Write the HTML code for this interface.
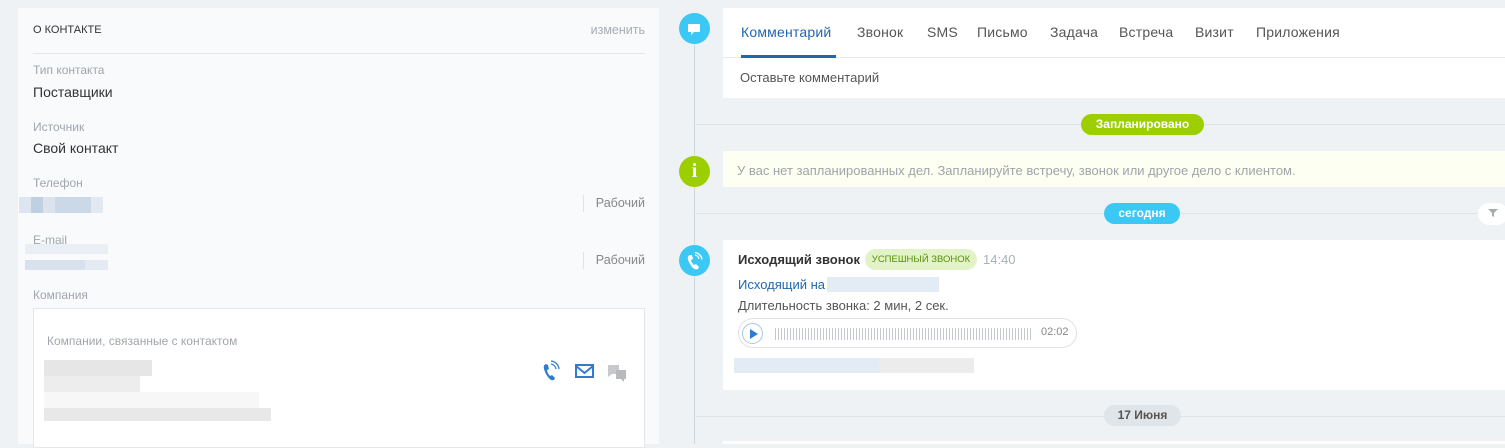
<!DOCTYPE html>
<html><head><meta charset="utf-8"><style>
*{margin:0;padding:0;box-sizing:border-box}
body{width:1505px;height:444px;overflow:hidden;background:#eef2f4;font-family:"Liberation Sans",sans-serif;position:relative}
.a{position:absolute}
.lbl{font-size:12px;color:#a0a6ab}
.val{font-size:14px;color:#333}
.pill{position:absolute;height:21px;border-radius:11px;color:#fff;font-size:12px;font-weight:bold;text-align:center;line-height:21px}
.circ{position:absolute;width:31px;height:31px;border-radius:50%;left:679px}
.hl{position:absolute;left:694px;right:0;height:1px;background:#dde3e7}
.tab{position:absolute;top:24px;font-size:14px;color:#555;letter-spacing:0.2px}
.r{position:absolute;right:860px;text-align:right}
</style></head><body>
<div class="a" style="left:18px;top:8px;width:641px;height:436px;background:#f8fafc"></div>
<div class="a" style="left:33px;top:24px;font-size:11px;color:#333">О КОНТАКТЕ</div>
<div class="r" style="top:23px;font-size:12.5px;color:#a8adb2">изменить</div>
<div class="a" style="left:33px;top:53px;width:612px;height:1px;background:#e3e7ea"></div>
<div class="a lbl" style="left:33px;top:63px">Тип контакта</div>
<div class="a val" style="left:33px;top:84px">Поставщики</div>
<div class="a lbl" style="left:33px;top:120px">Источник</div>
<div class="a val" style="left:33px;top:140px">Свой контакт</div>
<div class="a lbl" style="left:33px;top:176px">Телефон</div>
<div class="a" style="left:19px;top:197px;width:84px;height:16px;background:linear-gradient(90deg,#dde6f0 0 12px,#bfd0e3 12px 24px,#dbe4ee 24px 36px,#cbd8e7 36px 72px,#e2e9f2 72px)"></div>
<div class="a" style="left:583px;top:195px;width:1px;height:17px;background:#e0e4e7"></div>
<div class="r" style="top:196px;font-size:12.5px;color:#888">Рабочий</div>
<div class="a lbl" style="left:33px;top:233px">E-mail</div>
<div class="a" style="left:25px;top:244px;width:83px;height:10px;background:#eaeff6"></div>
<div class="a" style="left:25px;top:260px;width:83px;height:10px;background:linear-gradient(90deg,#d8e2ee 0 60px,#e4eaf2 60px)"></div>
<div class="a" style="left:583px;top:252px;width:1px;height:17px;background:#e0e4e7"></div>
<div class="r" style="top:253px;font-size:12.5px;color:#888">Рабочий</div>
<div class="a lbl" style="left:33px;top:288px">Компания</div>
<div class="a" style="left:33px;top:308px;width:612px;height:140px;background:#fff;border:1px solid #e3e7ea"></div>
<div class="a" style="left:47px;top:334px;font-size:12px;color:#a0a6ab">Компании, связанные с контактом</div>
<div class="a" style="left:44px;top:360px;width:108px;height:16px;background:#e6e6e6"></div>
<div class="a" style="left:44px;top:376px;width:96px;height:16px;background:#ededed"></div>
<div class="a" style="left:44px;top:392px;width:215px;height:16px;background:#f7f7f7"></div>
<div class="a" style="left:44px;top:408px;width:227px;height:13px;background:#e8e8e8"></div>
<svg class="a" style="left:540px;top:360px" width="100" height="24" viewBox="0 0 100 24">
<path d="M6 4c-3 1-3 4 0 10 3 5 5 7 8 6l1-2-3-3-2 1c-1-1-3-4-3-6l2-1-1-4z" fill="#2f7bd0"/>
<path d="M11 4a6 6 0 0 1 5 5M11 1a9 9 0 0 1 8 8" stroke="#2f7bd0" fill="none" stroke-width="1.3"/>
<rect x="36" y="5" width="17" height="12" fill="none" stroke="#2f7bd0" stroke-width="2"/>
<path d="M36 6l8.5 7 8.5-7" stroke="#2f7bd0" fill="none" stroke-width="2"/>
<path d="M68 5h11v9h-7l-4 3v-3z" fill="#c7c9cc"/><path d="M76 10h10v9h-2v3l-3-3h-5z" fill="#b8bbbe"/>
</svg>
<div class="a" style="left:694px;top:30px;width:1px;height:414px;background:#d0d7dc"></div>
<div class="circ" style="top:13px;background:#3bc8f5"></div>
<svg class="a" style="left:686px;top:21px" width="16" height="16"><path d="M2 3h12v8H8l-3 3v-3H2z" fill="#fff"/></svg>
<div class="circ" style="top:156px;background:#9dcf00"></div>
<div class="a" style="left:687px;top:156px;width:15px;text-align:center;color:#fff;font:bold 20px/31px 'Liberation Serif',serif">i</div>
<div class="circ" style="top:245px;background:#3bc8f5"></div>
<svg class="a" style="left:685px;top:252px" width="18" height="18"><path d="M5 3c-3 1-3 4 0 9s5 6 8 5l1-2-3-3-2 1c-1-1-3-3-3-5l2-1-1-4z" fill="#fff"/><path d="M10 3a5 5 0 0 1 4 4M10 0.5a8 8 0 0 1 7 7" stroke="#fff" fill="none" stroke-width="1.3"/></svg>
<div class="a" style="left:723px;top:8px;width:782px;height:90px;background:#fff"></div>
<div class="a" style="left:723px;top:57px;width:782px;height:1px;background:#e8ebed"></div>
<div class="tab" style="left:741px;color:#2067b0">Комментарий</div>
<div class="a" style="left:741px;top:55px;width:95px;height:3px;background:#2067b0"></div>
<div class="tab" style="left:857px">Звонок</div>
<div class="tab" style="left:927px">SMS</div>
<div class="tab" style="left:977px">Письмо</div>
<div class="tab" style="left:1050px">Задача</div>
<div class="tab" style="left:1119px">Встреча</div>
<div class="tab" style="left:1195px">Визит</div>
<div class="tab" style="left:1256px">Приложения</div>
<div class="a" style="left:740px;top:70px;font-size:13px;color:#555">Оставьте комментарий</div>
<div class="hl" style="top:124px"></div>
<div class="pill" style="left:1081px;top:114px;width:123px;background:#9dcf00">Запланировано</div>
<div class="a" style="left:723px;top:151px;width:782px;height:36px;background:#fefff3"></div>
<div class="a" style="left:737px;top:163px;font-size:13px;color:#a0a4a8">У вас нет запланированных дел. Запланируйте встречу, звонок или другое дело с клиентом.</div>
<div class="hl" style="top:213px"></div>
<div class="pill" style="left:1104px;top:203px;width:76px;background:#3bc8f5">сегодня</div>
<div class="a" style="left:1478px;top:203px;width:30px;height:22px;border-radius:11px;background:#fff"></div>
<svg class="a" style="left:1488px;top:208px" width="10" height="10"><path d="M0 1h10L6 5v4L4 8V5z" fill="#a8acb0"/></svg>
<div class="a" style="left:723px;top:240px;width:782px;height:150px;background:#fff"></div>
<div class="a" style="left:738px;top:252px;font-size:13px;font-weight:bold;color:#333">Исходящий звонок</div>
<div class="a" style="left:865px;top:249px;width:112px;height:21px;border-radius:11px;background:#e2f4c7;color:#5a8c10;font-size:9.5px;line-height:21px;text-align:center">УСПЕШНЫЙ ЗВОНОК</div>
<div class="a" style="left:983px;top:252px;font-size:13px;color:#aab0b5">14:40</div>
<div class="a" style="left:738px;top:277px;font-size:13px;color:#2067b0">Исходящий на</div>
<div class="a" style="left:827px;top:277px;width:112px;height:15px;background:#e3ebf5"></div>
<div class="a" style="left:738px;top:298px;font-size:13px;color:#555">Длительность звонка: 2 мин, 2 сек.</div>
<div class="a" style="left:738px;top:318px;width:339px;height:30px;border:1px solid #dde2e6;border-radius:15px"></div>
<div class="a" style="left:742px;top:323px;width:21px;height:21px;border:1px solid #a9c6e8;border-radius:50%"></div>
<svg class="a" style="left:749px;top:329px" width="9" height="10"><path d="M1 0l8 5-8 5z" fill="#2f7bd0"/></svg>
<div class="a" style="left:775px;top:328px;width:257px;height:12px;background:repeating-linear-gradient(90deg,#c4c8cc 0 1px,transparent 1px 3px)"></div>
<div class="a" style="left:1041px;top:326px;font-size:11px;color:#888">02:02</div>
<div class="a" style="left:734px;top:358px;width:240px;height:15px;background:linear-gradient(90deg,#e3ebf5 0 145px,#ececec 145px)"></div>
<div class="hl" style="top:416px"></div>
<div class="pill" style="left:1104px;top:405px;width:77px;background:#dfe5e9;color:#555">17 Июня</div>
<div class="a" style="left:723px;top:441px;width:782px;height:3px;background:#fff"></div>
</body></html>
